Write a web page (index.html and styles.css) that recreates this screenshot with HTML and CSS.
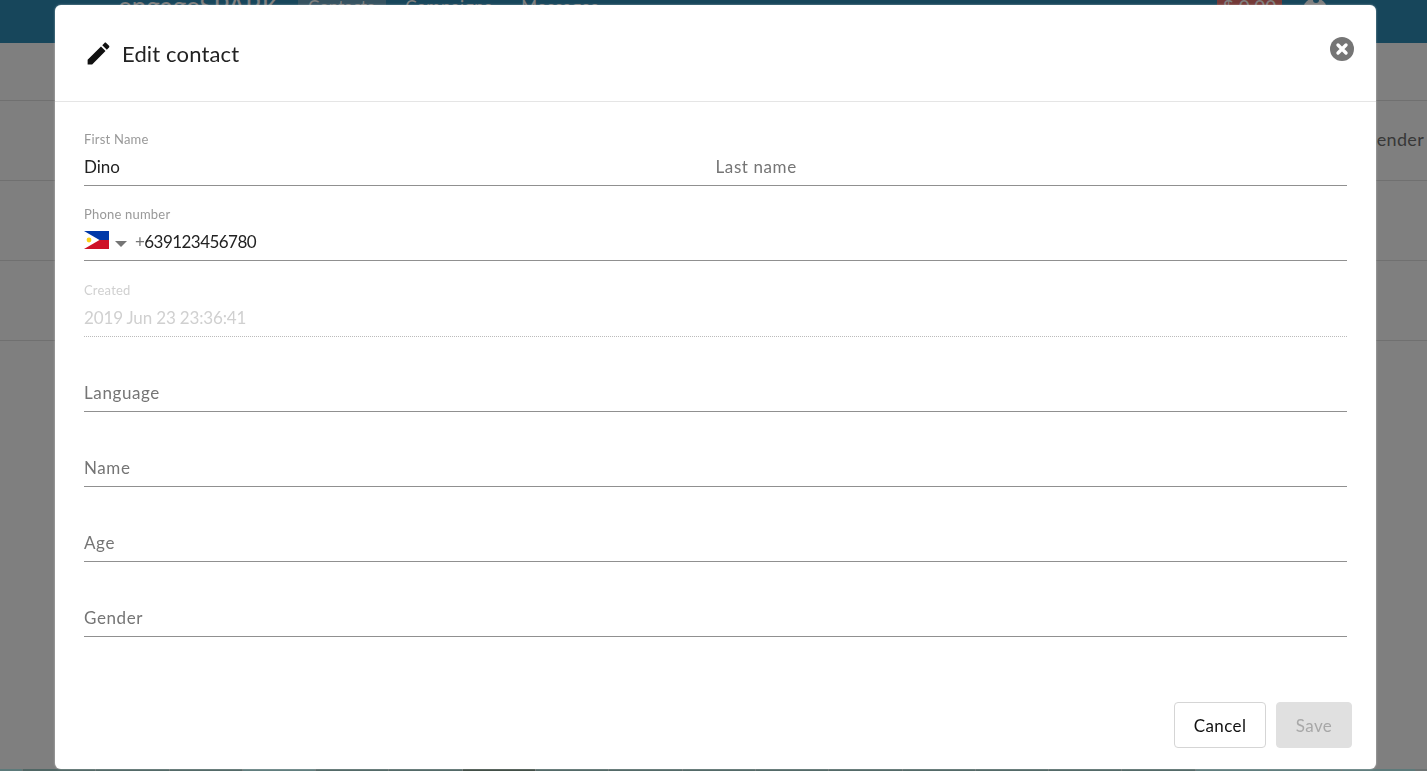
FILE: index.html
```html
<!DOCTYPE html>
<html lang="en">
<head>
    <meta charset="UTF-8">
    <meta name="viewport" content="width=device-width, initial-scale=1.0">
    <title>Edit contact</title>
    <link rel="stylesheet" href="styles.css">
</head>
<body>
    <div class="page">
        <header class="topbar">
            <span class="logo">engageSPARK</span>
            <nav class="nav">
                <a href="#" class="nav-item active">Contacts</a>
                <a href="#" class="nav-item">Campaigns</a>
                <a href="#" class="nav-item">Messages</a>
            </nav>
            <span class="balance">$ 0.00</span>
            <svg class="user-icon" viewBox="0 0 24 24" width="24" height="24">
                <circle cx="12" cy="10" r="12" fill="#fff"/>
                <circle cx="13" cy="0" r="3" fill="#2f8cb6"/>
            </svg>
        </header>
        <div class="toolbar"></div>
        <div class="table-row table-head"><span>Gender</span></div>
        <div class="table-row"></div>
        <div class="table-row"></div>
        <div class="page-fill"></div>
        <div class="page-strip">
            <div class="tile tile-first tile-teal"></div>
            <div class="tile"></div>
            <div class="tile"></div>
            <div class="tile"></div>
            <div class="tile tile-teal"></div>
            <div class="tile"></div>
            <div class="tile"></div>
            <div class="tile tile-dark"></div>
            <div class="tile"></div>
            <div class="tile"></div>
            <div class="tile"></div>
            <div class="tile"></div>
            <div class="tile"></div>
            <div class="tile"></div>
            <div class="tile"></div>
            <div class="tile"></div>
            <div class="tile"></div>
            <div class="tile tile-teal"></div>
            <div class="tile tile-teal"></div>
            <div class="tile tile-teal"></div>
        </div>
    </div>

    <div class="overlay"></div>

    <div class="modal">
        <div class="modal-header">
            <svg class="edit-icon" viewBox="0 0 24 24" width="29" height="29">
                <path d="M3 17.25V21h3.75L17.81 9.94l-3.75-3.75L3 17.25zM20.71 7.04c.39-.39.39-1.02 0-1.41l-2.34-2.34c-.39-.39-1.02-.39-1.41 0l-1.83 1.83 3.75 3.75 1.83-1.83z"/>
            </svg>
            <h2>Edit contact</h2>
            <svg class="close-icon" viewBox="0 0 24 24" width="24" height="24">
                <circle cx="12" cy="12" r="12" fill="#757575"/>
                <path d="M8 8l8 8M16 8l-8 8" stroke="#fff" stroke-width="3.4" stroke-linecap="round"/>
            </svg>
        </div>

        <form class="modal-body">
            <div class="field-row">
                <div class="field">
                    <label>First Name</label>
                    <div class="value">Dino</div>
                </div>
                <div class="field">
                    <div class="value placeholder">Last name</div>
                </div>
            </div>

            <div class="field">
                <label>Phone number</label>
                <div class="value phone">
                    <svg class="flag" viewBox="0 0 25 18" width="25" height="18">
                        <rect width="25" height="9" fill="#0038a8"/>
                        <rect y="9" width="25" height="9" fill="#ce1126"/>
                        <path d="M0 0L15.5 9 0 18z" fill="#fff"/>
                        <circle cx="5" cy="9" r="2.4" fill="#fcd116"/>
                    </svg>
                    <span class="caret"></span>
                    <span class="phone-number"><span class="dial">+</span>639123456780</span>
                </div>
            </div>

            <div class="field disabled">
                <label>Created</label>
                <div class="value">2019 Jun 23 23:36:41</div>
            </div>

            <div class="field">
                <div class="value placeholder">Language</div>
            </div>
            <div class="field">
                <div class="value placeholder">Name</div>
            </div>
            <div class="field">
                <div class="value placeholder">Age</div>
            </div>
            <div class="field">
                <div class="value placeholder">Gender</div>
            </div>
        </form>

        <div class="modal-footer">
            <button type="button" class="btn">Cancel</button>
            <button type="button" class="btn btn-save" disabled>Save</button>
        </div>
    </div>
</body>
</html>
```

FILE: styles.css
```css
html, body {
    height: 100%;
}

body {
    margin: 0;
    font-family: "Lato", "Open Sans", sans-serif;
    color: #222;
    overflow: hidden;
}

.page {
    display: flex;
    flex-direction: column;
    height: 771px;
    background: #fff;
}

.topbar {
    display: flex;
    align-items: flex-start;
    flex: 0 0 43px;
    padding-left: 118px;
    background: #2f8cb6;
    color: #fff;
    box-sizing: border-box;
    overflow: hidden;
}

.logo {
    width: 180px;
    margin-top: -9px;
    font-size: 26px;
    line-height: 30px;
    white-space: nowrap;
}

.nav {
    display: flex;
    gap: 9px;
    height: 43px;
}

.nav-item {
    padding: 0 10px;
    color: #fff;
    font-size: 17px;
    letter-spacing: 0.6px;
    line-height: 14px;
    text-decoration: none;
}

.nav-item.active {
    padding-right: 12px;
    background: #6aa5c0;
    letter-spacing: 0;
}

.balance {
    width: 65px;
    height: 43px;
    margin-left: auto;
    margin-right: 21px;
    background: #e8736e;
    font-size: 19px;
    line-height: 14px;
    text-align: center;
}

.user-icon {
    margin-right: 100px;
}

.toolbar {
    flex: 0 0 58px;
    border-bottom: 1px solid #e0e0e0;
    box-sizing: border-box;
}

.table-row {
    flex: 0 0 80px;
    border-bottom: 1px solid #e0e0e0;
    box-sizing: border-box;
}

.table-head {
    display: flex;
    justify-content: flex-end;
    align-items: center;
    padding: 0 3px 3px 0;
    font-size: 18px;
    letter-spacing: 0.3px;
    color: #707070;
}

.page-fill {
    flex: 1;
}

.page-strip {
    display: flex;
    flex: 0 0 2px;
    gap: 1px;
    background: #d8e4e4;
}

.tile {
    flex: 0 0 72.3px;
    background: #9eccc8;
}

.tile-first {
    flex-basis: 22px;
}

.tile-teal {
    background: #b8f4f4;
}

.tile-dark {
    background: #789484;
}

.overlay {
    position: fixed;
    top: 0;
    left: 0;
    right: 0;
    bottom: 0;
    background: rgba(0, 0, 0, 0.5);
}

.modal {
    position: fixed;
    top: 5px;
    left: 55px;
    width: 1321px;
    height: 764px;
    display: flex;
    flex-direction: column;
    background: #fff;
    border-radius: 6px;
    box-shadow: 0 0 2px rgba(255, 255, 255, 0.6);
}

.modal-header {
    display: flex;
    align-items: center;
    flex: 0 0 97px;
    box-sizing: border-box;
    padding: 0 22px 0 29px;
    border-bottom: 1px solid #e5e5e5;
}

.modal-header h2 {
    flex: 1;
    margin: 0 0 0 9px;
    font-size: 22px;
    font-weight: 400;
    letter-spacing: 0.15px;
    color: #222;
}

.edit-icon {
    fill: #111;
}

.close-icon {
    margin-top: -9px;
}

.modal-body {
    flex: 1;
    padding: 9px 29px 0;
}

.field-row {
    display: grid;
    grid-template-columns: 1fr 1fr;
}

.field {
    display: flex;
    flex-direction: column;
    justify-content: flex-end;
    height: 75.2px;
    box-sizing: border-box;
    border-bottom: 1px solid #909090;
}

.field label {
    font-size: 13px;
    letter-spacing: 0.2px;
    line-height: 16px;
    color: #999;
    margin-bottom: 9px;
}

.value {
    height: 29px;
    font-size: 17px;
    line-height: 22px;
}

.placeholder {
    color: #757575;
    letter-spacing: 0.6px;
}

.phone {
    display: flex;
    align-items: flex-start;
}

.flag {
    margin-right: 6px;
    flex: none;
}

.caret {
    width: 0;
    height: 0;
    margin-top: 10px;
    margin-right: 8px;
    border-left: 6px solid transparent;
    border-right: 6px solid transparent;
    border-top: 6px solid #757575;
}

.phone-number {
    letter-spacing: -0.55px;
}

.dial {
    color: #757575;
}

.field.disabled {
    border-bottom: 1px dotted #bbb;
}

.field.disabled label,
.field.disabled .value {
    color: #d0d0d0;
}

.field.disabled .value {
    letter-spacing: -0.15px;
}

.modal-footer {
    display: flex;
    justify-content: flex-end;
    gap: 10px;
    padding: 0 24px 21px;
}

.btn {
    width: 92px;
    height: 46px;
    padding: 0;
    font-family: inherit;
    font-size: 17px;
    letter-spacing: 0.4px;
    color: #111;
    background: #fff;
    border: 1px solid #d5d5d5;
    border-radius: 4px;
}

.btn-save {
    width: 76px;
    color: #a8a8a8;
    background: #e0e0e0;
    border-color: #e0e0e0;
}
```
